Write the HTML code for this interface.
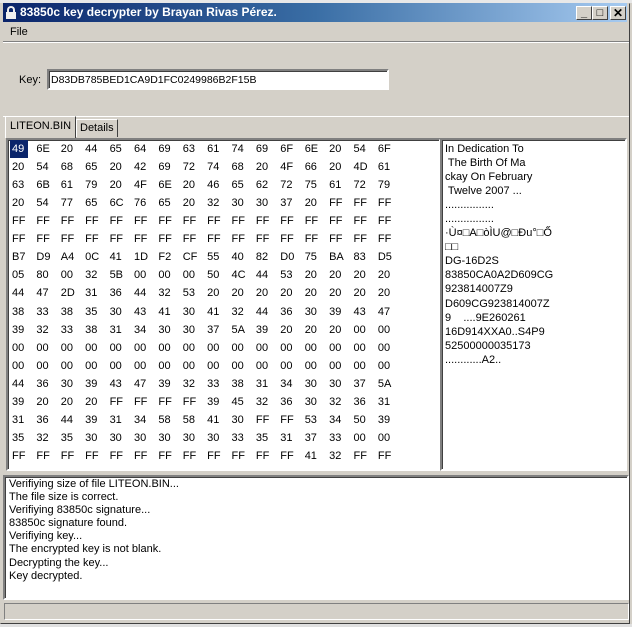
<!DOCTYPE html><html><head><style>
*{margin:0;padding:0;box-sizing:border-box}
body{width:632px;height:627px;background:#d4d0c8;position:relative;overflow:hidden;font-family:"Liberation Sans",sans-serif;font-size:11px;color:#000}
.a{position:absolute}
.sunk{border:2px solid;border-color:#808080 #fff #fff #808080;box-shadow:inset 1px 1px 0 #404040}
.hx{position:absolute;left:12px;white-space:pre;font-size:11px;line-height:14px}
.hx span{display:inline-block;width:24.4px}
.hl{display:inline-block;background:#0a246a;color:#fff;font-style:normal;margin:-2px 0 -2px -2px;padding:2px 4px 2px 2px;line-height:14px}
.btn{position:absolute;top:6px;width:16px;height:14px;background:#d4d0c8;border:1px solid;border-color:#fff #404040 #404040 #fff;font-size:11px;font-weight:bold;text-align:center;line-height:12px}
</style></head><body>
<div class="a" style="left:0;top:0;width:632px;height:3px;background:#e8e8e8"></div>
<div class="a" style="left:0;top:3px;width:630px;height:621px;border:1px solid;border-color:#d4d0c8 #404040 #404040 #d4d0c8;background:#d4d0c8"></div>
<div class="a" style="left:3px;top:3px;width:624px;height:19px;background:linear-gradient(90deg,#0a246a,#3a6ea5 50%,#a6caf0)"></div>
<div class="a" style="left:6px;top:6px;width:10px;height:13px;">
<div class="a" style="left:1px;top:0;width:8px;height:8px;border:2px solid #eee;border-bottom:none;border-radius:4px 4px 0 0"></div>
<div class="a" style="left:0;top:6px;width:10px;height:7px;background:#f0f0f0"></div></div>
<div class="a" style="left:20px;top:5px;color:#fff;font-weight:bold;font-size:12px">83850c key decrypter by Brayan Rivas Pérez.</div>
<div class="btn" style="left:576px">_</div><div class="btn" style="left:592px">□</div><div class="btn" style="left:610px;font-size:12px">✕</div>
<div class="a" style="left:10px;top:26px;font-size:11px">File</div>
<div class="a" style="left:3px;top:41px;width:626px;height:2px;border-top:1px solid #808080;border-bottom:1px solid #fff"></div>
<div class="a" style="left:19px;top:74px">Key:</div>
<div class="a sunk" style="left:47px;top:69px;width:342px;height:21px;background:#fff;padding:3px 2px;font-size:10.5px">D83DB785BED1CA9D1FC0249986B2F15B</div>
<div class="a" style="left:3px;top:116px;width:626px;border-top:1px solid #fff"></div>
<div class="a" style="left:5px;top:116px;width:71px;height:22px;background:#d4d0c8;border:1px solid;border-bottom:none;border-color:#fff #404040 #d4d0c8 #fff;padding:3px 0 0 4px">LITEON.BIN</div>
<div class="a" style="left:76px;top:119px;width:42px;height:18px;border:1px solid;border-bottom:none;border-color:#fff #404040 #d4d0c8 #fff;padding:2px 0 0 3px">Details</div>
<div class="a sunk" style="left:6px;top:138px;width:435px;height:333px;background:#fff"></div>
<div class="a sunk" style="left:440px;top:138px;width:187px;height:333px;background:#fff"></div>
<div id="hex"></div>
<div class="a" style="left:445px;top:142px;line-height:14.05px;white-space:pre;font-size:11px">In Dedication To
 The Birth Of Ma
ckay On February
 Twelve 2007 ...
................
................
·Ù¤□A□òÌU@□Ðu°□Ố
□□
DG-16D2S
83850CA0A2D609CG
923814007Z9
D609CG923814007Z
9    ....9E260261
16D914XXA0..S4P9
52500000035173
............A2..</div>
<div class="a sunk" style="left:3px;top:475px;width:626px;height:125px;background:#fff"></div>
<div class="a" style="left:9px;top:478px;line-height:13.1px;white-space:pre">Verifiying size of file LITEON.BIN...
The file size is correct.
Verifiying 83850c signature...
83850c signature found.
Verifiying key...
The encrypted key is not blank.
Decrypting the key...
Key decrypted.</div>
<div class="a" style="left:4px;top:603px;width:625px;height:17px;border:1px solid;border-color:#808080 #fff #fff #808080"></div>
<div class="a" style="left:0;top:624px;width:632px;height:3px;background:#e0e0e0"></div>
<script>
var d=["49 6E 20 44 65 64 69 63 61 74 69 6F 6E 20 54 6F","20 54 68 65 20 42 69 72 74 68 20 4F 66 20 4D 61","63 6B 61 79 20 4F 6E 20 46 65 62 72 75 61 72 79","20 54 77 65 6C 76 65 20 32 30 30 37 20 FF FF FF","FF FF FF FF FF FF FF FF FF FF FF FF FF FF FF FF","FF FF FF FF FF FF FF FF FF FF FF FF FF FF FF FF","B7 D9 A4 0C 41 1D F2 CF 55 40 82 D0 75 BA 83 D5","05 80 00 32 5B 00 00 00 50 4C 44 53 20 20 20 20","44 47 2D 31 36 44 32 53 20 20 20 20 20 20 20 20","38 33 38 35 30 43 41 30 41 32 44 36 30 39 43 47","39 32 33 38 31 34 30 30 37 5A 39 20 20 20 00 00","00 00 00 00 00 00 00 00 00 00 00 00 00 00 00 00","00 00 00 00 00 00 00 00 00 00 00 00 00 00 00 00","44 36 30 39 43 47 39 32 33 38 31 34 30 30 37 5A","39 20 20 20 FF FF FF FF 39 45 32 36 30 32 36 31","31 36 44 39 31 34 58 58 41 30 FF FF 53 34 50 39","35 32 35 30 30 30 30 30 30 33 35 31 37 33 00 00","FF FF FF FF FF FF FF FF FF FF FF FF 41 32 FF FF"];
var h="";d.forEach(function(r,i){h+='<div class="hx" style="top:'+(142+i*18.06)+'px">'+r.split(" ").map(function(c,j){return (i==0&&j==0)?'<span><i class="hl">'+c+'</i></span>':'<span>'+c+'</span>'}).join("")+'</div>'});
document.getElementById("hex").innerHTML=h;
</script>
</body></html>
